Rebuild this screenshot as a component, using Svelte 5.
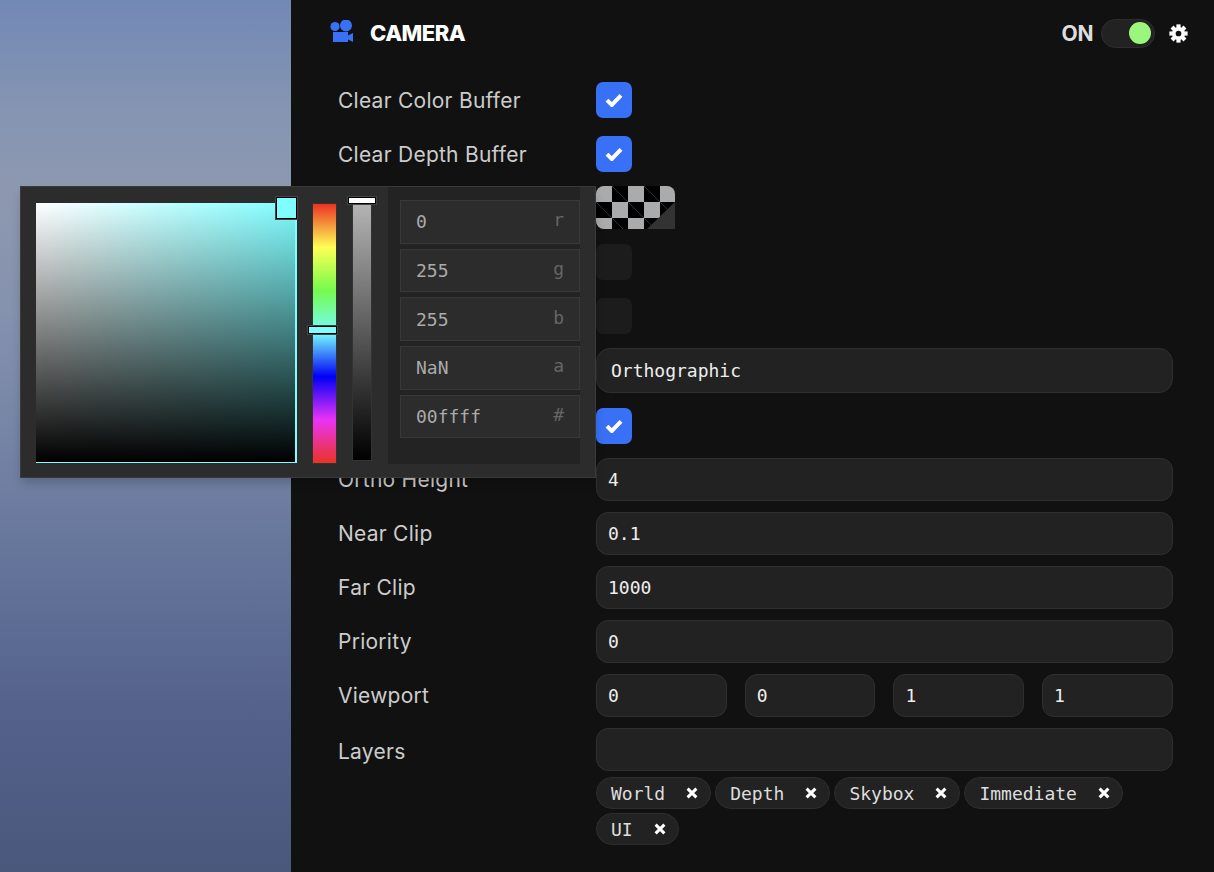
<script lang="ts">
  const teeth = [0, 45, 90, 135, 180, 225, 270, 315];
  const tags = ['World', 'Depth', 'Skybox', 'Immediate', 'UI'];
  const channels = [
    { value: '0', key: 'r' },
    { value: '255', key: 'g' },
    { value: '255', key: 'b' },
    { value: 'NaN', key: 'a' },
    { value: '00ffff', key: '#' }
  ];
  const inputs = [
    { label: 'Ortho Height', value: '4' },
    { label: 'Near Clip', value: '0.1' },
    { label: 'Far Clip', value: '1000' },
    { label: 'Priority', value: '0' }
  ];
  const viewport = ['0', '0', '1', '1'];
</script>

{#snippet check()}
  <span class="checkbox on">
    <svg width="18" height="14" viewBox="0 0 18 14" aria-hidden="true">
      <path d="M2 7.2 L6.8 12 L16 2.4" fill="none" stroke="#fff" stroke-width="4" />
    </svg>
  </span>
{/snippet}

<div class="app">
  <aside class="viewport-view"></aside>

  <main class="panel">
    <header class="head">
      <svg class="cam" width="24" height="24" viewBox="0 0 24 24" aria-hidden="true">
        <circle cx="5" cy="6.5" r="4.6" />
        <circle cx="16" cy="5.5" r="6" />
        <rect x="3" y="12" width="15" height="10" />
        <path d="M18 15.5 L23 13 V22 L18 19.5 Z" />
      </svg>
      <h2>CAMERA</h2>
      <span class="on-label">ON</span>
      <span class="toggle"><span class="knob"></span></span>
      <svg class="gear" width="19" height="19" viewBox="0 0 20 20" aria-hidden="true">
        {#each teeth as angle}
          <rect x="7.8" y="0.4" width="4.4" height="5" transform={`rotate(${angle} 10 10)`} />
        {/each}
        <path
          fill-rule="evenodd"
          d="M10 3.2 a6.8 6.8 0 1 0 0 13.6 a6.8 6.8 0 1 0 0 -13.6 Z M10 7 a3 3 0 1 1 0 6 a3 3 0 1 1 0 -6 Z"
        />
      </svg>
    </header>

    <div class="row check-row">
      <span class="label">Clear Color Buffer</span>
      {@render check()}
    </div>
    <div class="row check-row">
      <span class="label">Clear Depth Buffer</span>
      {@render check()}
    </div>
    <div class="row">
      <span class="label"></span>
      <span class="swatch">
        <svg width="79" height="43" aria-hidden="true">
          <defs>
            <pattern id="tile" width="32" height="32" patternUnits="userSpaceOnUse">
              <rect width="32" height="32" fill="#000" />
              <rect width="16" height="16" fill="#a9abad" />
              <rect x="16" y="16" width="16" height="16" fill="#a9abad" />
              <path d="M16 0 L32 16 M0 16 L16 32" stroke="#3a3a3a" stroke-width="0.8" />
            </pattern>
          </defs>
          <rect width="79" height="43" fill="url(#tile)" />
          <polygon points="79,16 79,43 51,43" fill="#333" />
        </svg>
      </span>
    </div>
    <div class="row check-row">
      <span class="label"></span>
      <span class="checkbox"></span>
    </div>
    <div class="row check-row">
      <span class="label"></span>
      <span class="checkbox"></span>
    </div>
    <div class="row">
      <span class="label"></span>
      <div class="select">Orthographic</div>
    </div>
    <div class="row check-row">
      <span class="label"></span>
      {@render check()}
    </div>
    {#each inputs as input}
      <div class="row">
        <span class="label">{input.label}</span>
        <div class="input">{input.value}</div>
      </div>
    {/each}
    <div class="row">
      <span class="label">Viewport</span>
      <div class="quad">
        {#each viewport as value}
          <div class="input">{value}</div>
        {/each}
      </div>
    </div>
    <div class="row layers">
      <span class="label">Layers</span>
      <div class="layer-col">
        <div class="input"></div>
        <div class="tags">
          {#each tags as tag}
            <span class="tag">
              {tag}
              <svg width="12" height="12" viewBox="0 0 12 12" aria-hidden="true">
                <path d="M1.6 1.6 L10.4 10.4 M10.4 1.6 L1.6 10.4" stroke="#fff" stroke-width="3" />
              </svg>
            </span>
          {/each}
        </div>
      </div>
    </div>
  </main>

  <div class="picker">
    <div class="sv">
      <span class="sv-handle"></span>
    </div>
    <div class="hue">
      <span class="hue-handle"></span>
    </div>
    <div class="alpha">
      <span class="alpha-handle"></span>
    </div>
    <div class="fields">
      {#each channels as channel}
        <div class="field">
          <span>{channel.value}</span>
          <span class="key">{channel.key}</span>
        </div>
      {/each}
    </div>
  </div>
</div>

<style>
  :global(body) {
    background: #111;
    overflow: hidden;
  }

  .app {
    display: flex;
    position: relative;
    height: 872px;
    font-family: Inter, 'Liberation Sans', sans-serif;
    color: #ccc;
  }

  .viewport-view {
    flex: 0 0 291px;
    background: linear-gradient(
      180deg,
      #7289b5 0%,
      #8595b2 13%,
      #8d98b0 22%,
      #8592ae 36%,
      #707fa2 55%,
      #5e6e95 70%,
      #525f88 85%,
      #4a587c 100%
    );
  }

  .panel {
    flex: 1;
    min-width: 0;
    background: #111;
    padding: 0 41.2px 0 47px;
  }

  .head {
    display: flex;
    align-items: center;
    height: 66px;
    margin: 0 -14.8px 7px -8px;
  }

  .cam {
    fill: #3870f6;
    margin-top: -2px;
  }

  h2 {
    margin: 0 auto 0 16px;
    font-size: 22px;
    font-weight: 800;
    color: #fff;
    letter-spacing: -0.5px;
  }

  .on-label {
    font-size: 21px;
    font-weight: 700;
    color: #ddd;
    margin-right: 7px;
  }

  .toggle {
    display: flex;
    align-items: center;
    justify-content: flex-end;
    box-sizing: border-box;
    width: 54px;
    height: 29px;
    padding-right: 3px;
    border-radius: 15px;
    background: #222;
    border: 1px solid #2e2e2e;
  }

  .knob {
    width: 22px;
    height: 22px;
    border-radius: 50%;
    background: #9bf67c;
  }

  .gear {
    fill: #fff;
    margin-left: 14px;
  }

  .row {
    display: flex;
    align-items: center;
    padding: 5px 0 6px;
  }

  .check-row {
    padding: 9px 0;
  }

  .label {
    flex: 0 0 258px;
    font-size: 21px;
    letter-spacing: 0.25px;
    color: #ccc;
  }

  .checkbox {
    display: flex;
    align-items: center;
    justify-content: center;
    width: 36px;
    height: 36px;
    border-radius: 7px;
    background: #1c1c1c;
  }

  .checkbox.on {
    background: #3870f6;
  }

  .swatch {
    display: block;
    width: 79px;
    height: 43px;
    overflow: hidden;
    border-radius: 8px 8px 0 8px;
  }

  .swatch svg {
    display: block;
  }

  .input,
  .select {
    flex: 1;
    box-sizing: border-box;
    height: 43px;
    padding: 0 11px;
    line-height: 41px;
    font-family: 'DejaVu Sans Mono', monospace;
    font-size: 18px;
    color: #eee;
    background: #222;
    border: 1px solid #2f2f2f;
    border-radius: 12px;
  }

  .select {
    height: 45px;
    padding: 0 14px;
    line-height: 43px;
    border-radius: 14px;
  }

  .quad {
    flex: 1;
    display: flex;
    gap: 18px;
  }

  .layers {
    align-items: flex-start;
  }

  .layers .label {
    line-height: 48px;
  }

  .layer-col {
    flex: 1;
    min-width: 0;
  }

  .layer-col .input {
    flex: none;
  }

  .tags {
    display: flex;
    flex-wrap: wrap;
    gap: 4px;
    margin-top: 6px;
  }

  .tag {
    display: flex;
    align-items: center;
    gap: 21px;
    box-sizing: border-box;
    height: 32px;
    padding: 0 12px 0 14px;
    font-family: 'DejaVu Sans Mono', monospace;
    font-size: 18px;
    color: #ddd;
    background: #222;
    border: 1px solid #2e2e2e;
    border-radius: 16px;
  }

  .picker {
    position: absolute;
    left: 20px;
    top: 186px;
    box-sizing: border-box;
    width: 576px;
    height: 292px;
    display: flex;
    background: #2c2c2c;
    border: 1px solid #3a3a3a;
    box-shadow: 0 6px 10px -2px rgba(0, 0, 0, 0.22);
  }

  .sv {
    position: relative;
    box-sizing: border-box;
    flex: 0 0 261px;
    height: 260px;
    margin: 16px 0 0 15px;
    border-right: 2px solid #7ffdff;
    border-bottom: 1px solid #7ffdff;
    background:
      linear-gradient(180deg, transparent, #000),
      linear-gradient(90deg, #fff, #7ffdff);
  }

  .sv-handle {
    position: absolute;
    right: -2px;
    top: -6px;
    box-sizing: border-box;
    width: 21px;
    height: 22px;
    background: #7ffdff;
    border: 1px solid #000;
    outline: 1px solid #444;
  }

  .hue {
    position: relative;
    box-sizing: border-box;
    flex: 0 0 25px;
    height: 261px;
    margin: 16px 0 0 15px;
    border: 1px solid #333;
    background: linear-gradient(
      180deg,
      #ea3323 0%,
      #ffff54 16.67%,
      #75fb4c 33.33%,
      #75fbfd 50%,
      #0000f5 66.67%,
      #ea33f7 83.33%,
      #ea3323 100%
    );
  }

  .hue-handle {
    position: absolute;
    left: -5px;
    top: 122px;
    box-sizing: border-box;
    width: 29px;
    height: 8px;
    background: #7ffdff;
    border: 1px solid #000;
    outline: 1px solid #444;
  }

  .alpha {
    position: relative;
    box-sizing: border-box;
    flex: 0 0 20px;
    height: 258px;
    margin: 16px 0 0 15px;
    border: 1px solid #333;
    background: linear-gradient(180deg, #b4b4b4, #000);
  }

  .alpha-handle {
    position: absolute;
    left: -5px;
    top: -7px;
    box-sizing: border-box;
    width: 28px;
    height: 7px;
    background: #fff;
    border: 1px solid #000;
    outline: 1px solid #444;
  }

  .fields {
    flex: 0 0 191px;
    box-sizing: border-box;
    height: 277px;
    margin-left: 16px;
    padding: 13px 0 0 12px;
    display: flex;
    flex-direction: column;
    gap: 5px;
    background: #232323;
  }

  .field {
    display: flex;
    justify-content: space-between;
    align-items: center;
    box-sizing: border-box;
    width: 180px;
    height: 43.7px;
    padding: 0 15px;
    font-family: 'DejaVu Sans Mono', monospace;
    font-size: 18px;
    color: #aaa;
    background: #2c2c2c;
    border: 1px solid #383838;
  }

  .key {
    margin-top: -4px;
    color: #666;
  }
</style>
